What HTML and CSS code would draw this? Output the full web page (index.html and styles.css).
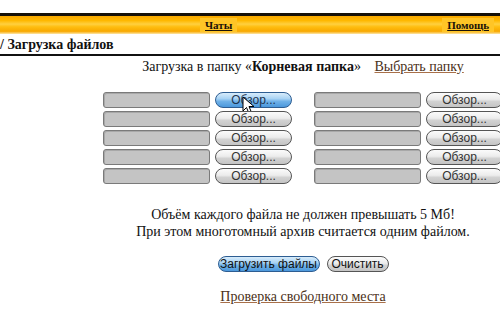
FILE: index.html
```html
<!DOCTYPE html>
<html lang="ru">
<head>
    <meta charset="UTF-8">
    <title>Загрузка файлов</title>
    <link rel="stylesheet" href="styles.css">
</head>
<body>
    <div class="topbar">
        <a class="nav-link nav-chat" href="#">Чаты</a>
        <a class="nav-link nav-help" href="#">Помощь</a>
    </div>
    <div class="crumbs">/ Загрузка файлов</div>

    <div class="content">
        <div class="folder">
            Загрузка в папку «<b>Корневая папка</b>»
            <a class="link folder-link" href="#">Выбрать папку</a>
        </div>

        <form class="files">
            <div class="file"><span class="field"></span><span class="btn btn-blue">Обзор...
                <svg class="cursor" width="13" height="19" viewBox="0 0 13 19"><path d="M1 1 L1 15 L4.5 11.5 L7 17.5 L9.5 16.5 L7 10.5 L12 10.5 Z" fill="#fff" stroke="#000" stroke-width="1"/></svg>
            </span></div>
            <div class="file"><span class="field"></span><span class="btn">Обзор...</span></div>
            <div class="file"><span class="field"></span><span class="btn">Обзор...</span></div>
            <div class="file"><span class="field"></span><span class="btn">Обзор...</span></div>
            <div class="file"><span class="field"></span><span class="btn">Обзор...</span></div>
            <div class="file"><span class="field"></span><span class="btn">Обзор...</span></div>
            <div class="file"><span class="field"></span><span class="btn">Обзор...</span></div>
            <div class="file"><span class="field"></span><span class="btn">Обзор...</span></div>
            <div class="file"><span class="field"></span><span class="btn">Обзор...</span></div>
            <div class="file"><span class="field"></span><span class="btn">Обзор...</span></div>
        </form>

        <p class="note">Объём каждого файла не должен превышать 5 Мб!<br>При этом многотомный архив считается одним файлом.</p>

        <div class="actions">
            <span class="btn btn-blue btn-upload">Загрузить файлы</span>
            <span class="btn btn-clear">Очистить</span>
        </div>

        <div class="space">
            <a class="link space-link" href="#">Проверка свободного места</a>
        </div>
    </div>
</body>
</html>
```

FILE: styles.css
```css
body {
    margin: 0;
    font-family: "Liberation Serif", "Times New Roman", serif;
    font-size: 14px;
    color: #111;
    background: #fff;
    width: 500px;
    overflow: hidden;
}

.topbar {
    margin-top: 13px;
    height: 18px;
    border-top: 3px solid #141008;
    background: linear-gradient(to bottom, #f7a800 0%, #ffb800 25%, #ffd040 45%, #ffbe10 60%, #f8a800 85%, #fde7a8 100%);
    display: flex;
    align-items: center;
}

.nav-link {
    font-size: 11px;
    font-weight: bold;
    color: #1a1208;
    text-decoration: underline;
    padding: 1px 5px;
    background: #ffc526;
}

.nav-chat {
    margin-left: 200px;
}

.nav-help {
    margin-left: auto;
    margin-right: 6px;
}

.crumbs {
    height: 19px;
    padding-top: 1px;
    line-height: 19px;
    font-weight: bold;
    border-bottom: 2px solid #111;
}

.content {
    margin-left: 103px;
    width: 400px;
    text-align: center;
}

.folder {
    margin-top: 2px;
    line-height: 18px;
}

.folder-link {
    margin-left: 10px;
}

.link {
    color: #4a3018;
    text-decoration: underline;
    text-decoration-color: #a8704a;
}

.files {
    margin: 16px 0 0;
    display: grid;
    grid-template-columns: 190px 190px;
    column-gap: 21px;
    row-gap: 3px;
    grid-auto-flow: column;
    grid-template-rows: repeat(5, 16px);
}

.file {
    display: flex;
    gap: 5px;
    height: 16px;
}

.field {
    box-sizing: border-box;
    width: 107px;
    height: 16px;
    background: #c4c4c4;
    border: 1px solid #7a7a7a;
    border-radius: 3px;
    box-shadow: inset 1px 1px 0 #a8a8a8;
}

.btn {
    position: relative;
    box-sizing: border-box;
    display: inline-flex;
    align-items: center;
    justify-content: center;
    width: 77px;
    height: 16px;
    border: 1px solid #555;
    border-radius: 8px;
    background: linear-gradient(to bottom, #fbfbfb 0%, #ececec 45%, #d2d2d2 60%, #c4c4c4 100%);
    font-family: "Liberation Sans", Arial, sans-serif;
    font-size: 12px;
    color: #333;
}

.btn-blue {
    border-color: #2d5d92;
    background: linear-gradient(to bottom, #d8ecfb 0%, #a9d3f4 40%, #6fb1e8 60%, #4c98dc 100%);
    color: #1e3450;
}

.cursor {
    position: absolute;
    left: 26px;
    top: 3px;
}

.note {
    margin: 22px 0 0;
    line-height: 17px;
}

.actions {
    margin-top: 16px;
    display: flex;
    justify-content: center;
    gap: 7px;
}

.btn-upload {
    width: 102px;
    color: #111;
}

.btn-clear {
    width: 62px;
    color: #111;
}

.space {
    margin-top: 16px;
    line-height: 18px;
}
```
